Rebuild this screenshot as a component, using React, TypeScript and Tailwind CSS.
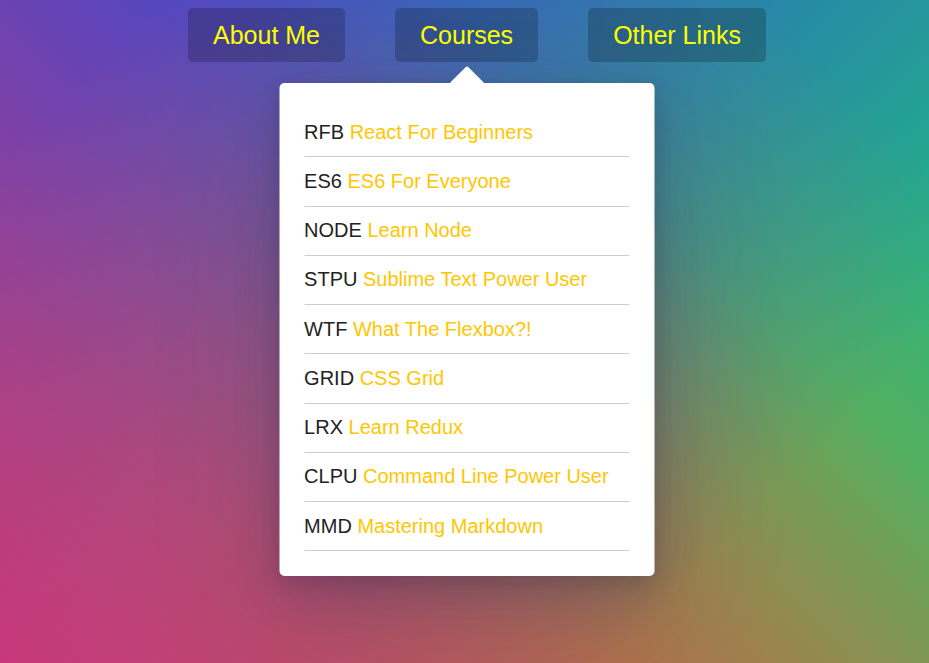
const courses = [
  { code: "RFB", name: "React For Beginners" },
  { code: "ES6", name: "ES6 For Everyone" },
  { code: "NODE", name: "Learn Node" },
  { code: "STPU", name: "Sublime Text Power User" },
  { code: "WTF", name: "What The Flexbox?!" },
  { code: "GRID", name: "CSS Grid" },
  { code: "LRX", name: "Learn Redux" },
  { code: "CLPU", name: "Command Line Power User" },
  { code: "MMD", name: "Mastering Markdown" },
];

const NavButton = ({ label }: { label: string }) => (
  <a href="#" className="inline-block rounded-[5px] bg-black/20 px-[25px] py-[12.5px] text-[25px] leading-[28.75px] text-[#ffff00] no-underline">
    {label}
  </a>
);

export default function App() {
  return (
    <div
      className="min-h-[663px] w-full overflow-hidden bg-[linear-gradient(45deg,#c8387a_0%,rgba(200,56,122,0)_70%),linear-gradient(135deg,#2d4bd7_10%,rgba(45,75,215,0)_80%),linear-gradient(225deg,#22b882_10%,rgba(34,184,130,0)_80%),linear-gradient(315deg,#d2960a_100%,rgba(210,150,10,0)_70%)]"
      style={{ fontFamily: '"Liberation Sans", Arial, sans-serif' }}
    >
      <nav className="pt-[8px]">
        <ul className="flex justify-center pl-[25px]">
          <li className="mx-[25px]">
            <NavButton label="About Me" />
          </li>
          <li className="relative mx-[25px]">
            <NavButton label="Courses" />

            {/* dropdown */}
            <div className="absolute left-1/2 top-[75px] z-10 w-[375px] -translate-x-1/2 rounded-[5px] bg-white p-[25px] shadow-[0_62px_125px_rgba(50,50,93,0.22),0_19px_44px_rgba(50,50,93,0.22),0_6px_19px_rgba(0,0,0,0.12)]">
              <span className="absolute left-1/2 top-[-12.5px] -ml-[12.5px] block h-[25px] w-[25px] rotate-45 rounded-[2px] bg-white" />
              <ul className="relative">
                {courses.map((c) => (
                  <li key={c.code} className="border-b border-[#cccccc] py-[12.625px] text-[20px] leading-[23px] text-[#222222]">
                    {c.code} <a href="#" className="text-[#ffc600] no-underline">{c.name}</a>
                  </li>
                ))}
              </ul>
            </div>
          </li>
          <li className="mx-[25px]">
            <NavButton label="Other Links" />
          </li>
        </ul>
      </nav>
    </div>
  );
}
